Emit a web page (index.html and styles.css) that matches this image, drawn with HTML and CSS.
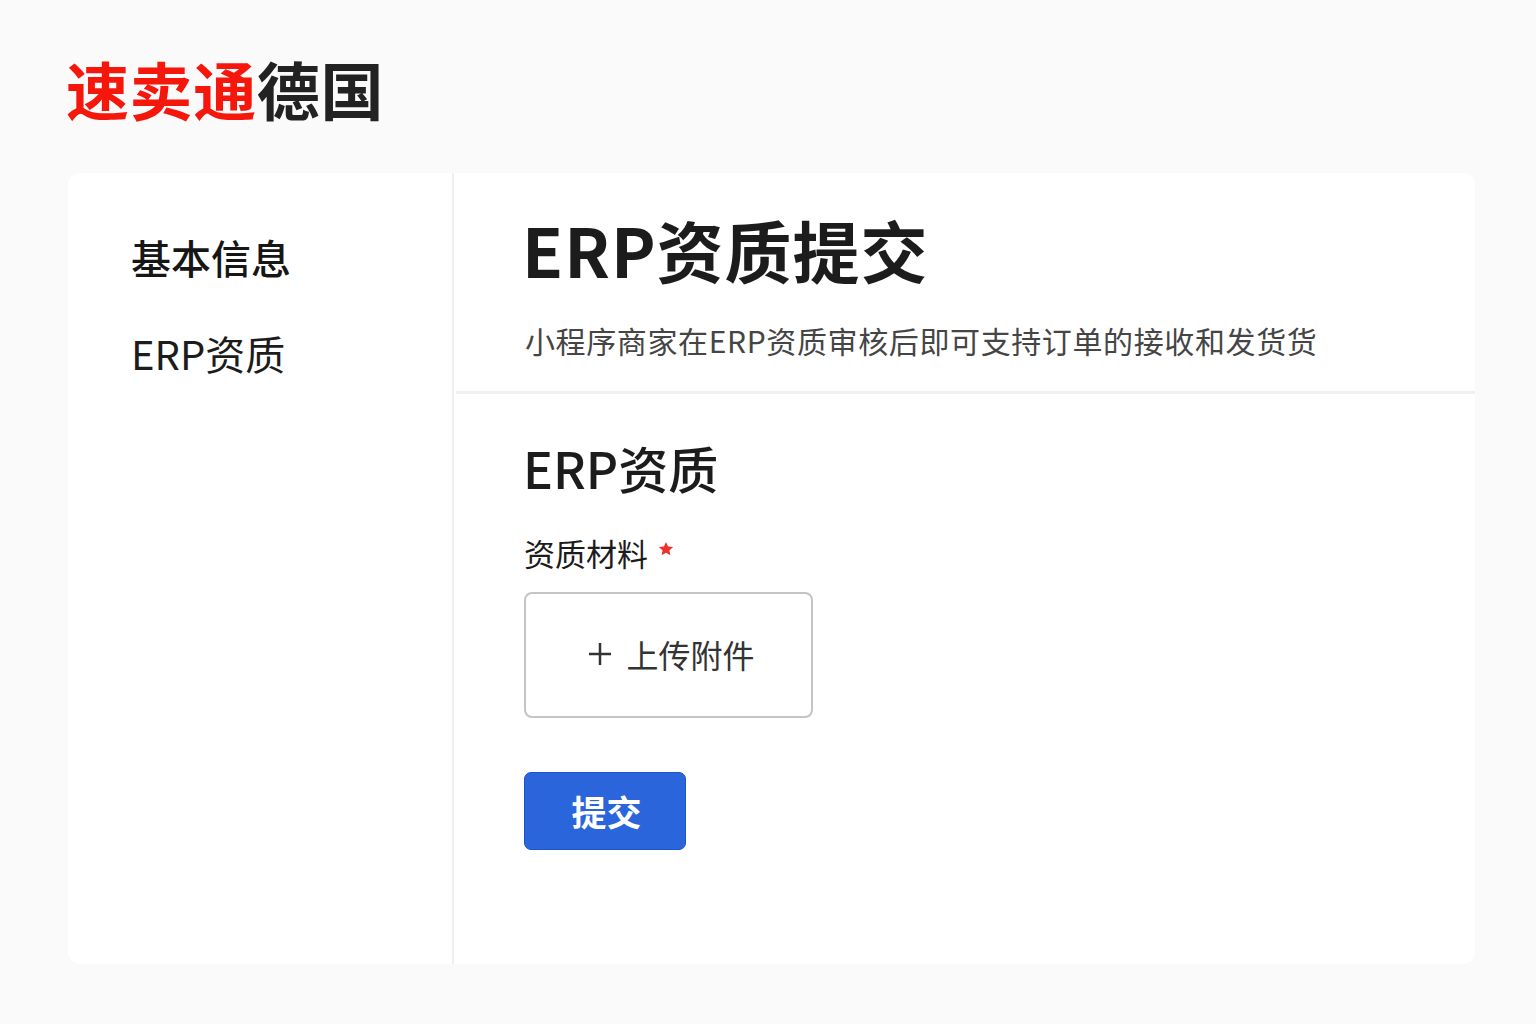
FILE: index.html
```html
<!DOCTYPE html>
<html lang="zh-CN">
<head>
    <meta charset="UTF-8">
    <meta name="viewport" content="width=device-width, initial-scale=1.0">
    <title>速卖通德国 - ERP资质提交</title>
    <link rel="stylesheet" href="styles.css">
</head>
<body>
    <header class="brand"><span class="brand-red">速卖通</span>德国</header>
    <div class="card">
        <nav class="sidebar">
            <a class="nav-item nav-active">基本信息</a>
            <a class="nav-item">ERP资质</a>
        </nav>
        <main class="content">
            <div class="page-head">
                <h1>ERP资质提交</h1>
                <p>小程序商家在ERP资质审核后即可支持订单的接收和发货货</p>
            </div>
            <section class="form-area">
                <h2>ERP资质</h2>
                <div class="field-label">
                    <span>资质材料</span>
                    <svg class="star" width="16" height="16" viewBox="0 0 16 16">
                        <path d="M8 1l2.100 4.600 5 .5-3.700 3.300 1 4.900L8 11.800l-4.400 2.500 1-4.900L.9 6.100l5-.5z" fill="#f0302e" />
                    </svg>
                </div>
                <button class="upload">
                    <svg width="24" height="24" viewBox="0 0 24 24">
                        <path d="M12 1v22M1 12h22" stroke="#333" stroke-width="2.500" fill="none" />
                    </svg>
                    <span>上传附件</span>
                </button>
                <button class="submit">提交</button>
            </section>
        </main>
    </div>
</body>
</html>
```

FILE: styles.css
```css
:root {
    --bg-color: #fafafa;
    --line-color: #efefef;
    --text-color: #1c1c1c;
    --blue: #2a65dc;
}

* {
    box-sizing: border-box;
}

body {
    margin: 0;
    height: 1024px;
    overflow: hidden;
    padding: 0 61px 0 68px;
    background-color: var(--bg-color);
    color: var(--text-color);
    font-family: "Noto Sans CJK SC", "Noto Sans", sans-serif;
}

.brand {
    height: 173px;
    padding-top: 42px;
    margin-left: -2px;
    font-size: 63px;
    line-height: 92px;
    font-weight: 700;
    letter-spacing: .6px;
    color: #222;
}

.brand-red {
    color: #f5170c;
}

.card {
    display: flex;
    height: 791px;
    background: #fff;
    border-radius: 12px;
}

.sidebar {
    display: flex;
    flex-direction: column;
    gap: 36px;
    width: 386px;
    padding: 54px 0 0 63px;
    border-right: 2px solid var(--line-color);
}

.nav-item {
    font-size: 40px;
    line-height: 60px;
}

.nav-active {
    font-weight: 500;
    color: #161616;
}

.content {
    flex: 1;
    padding-left: 2px;
}

.page-head {
    height: 221px;
    padding: 24px 0 0 68px;
    border-bottom: 3px solid var(--line-color);
}

h1 {
    margin: 0 0 0 -2px;
    font-size: 67px;
    line-height: 104px;
    font-weight: 700;
    letter-spacing: 1px;
}

.page-head p {
    margin: 17px 0 0 1px;
    font-size: 30px;
    line-height: 44px;
    letter-spacing: .62px;
    color: #454545;
}

.form-area {
    display: flex;
    flex-direction: column;
    align-items: flex-start;
    padding: 37px 0 0 68px;
}

h2 {
    margin: 0 0 0 -1px;
    font-size: 50px;
    line-height: 72px;
    font-weight: 500;
}

.field-label {
    display: flex;
    gap: 10px;
    margin-top: 27px;
    font-size: 31px;
    line-height: 46px;
}

.star {
    margin-top: 11px;
}

.upload {
    display: flex;
    justify-content: center;
    align-items: center;
    gap: 14px;
    width: 289px;
    height: 126px;
    margin-top: 16px;
    padding: 0 0 2px 6px;
    background: #fff;
    border: 2px solid #c4c4c4;
    border-radius: 8px;
    color: #333;
    font-family: inherit;
    font-size: 32px;
}

.submit {
    width: 162px;
    height: 78px;
    margin-top: 54px;
    padding: 0 0 2px 3px;
    background: var(--blue);
    border: 1px solid #1a55cf;
    border-radius: 7px;
    color: #fff;
    font-family: inherit;
    font-size: 35px;
    font-weight: 700;
}
```
